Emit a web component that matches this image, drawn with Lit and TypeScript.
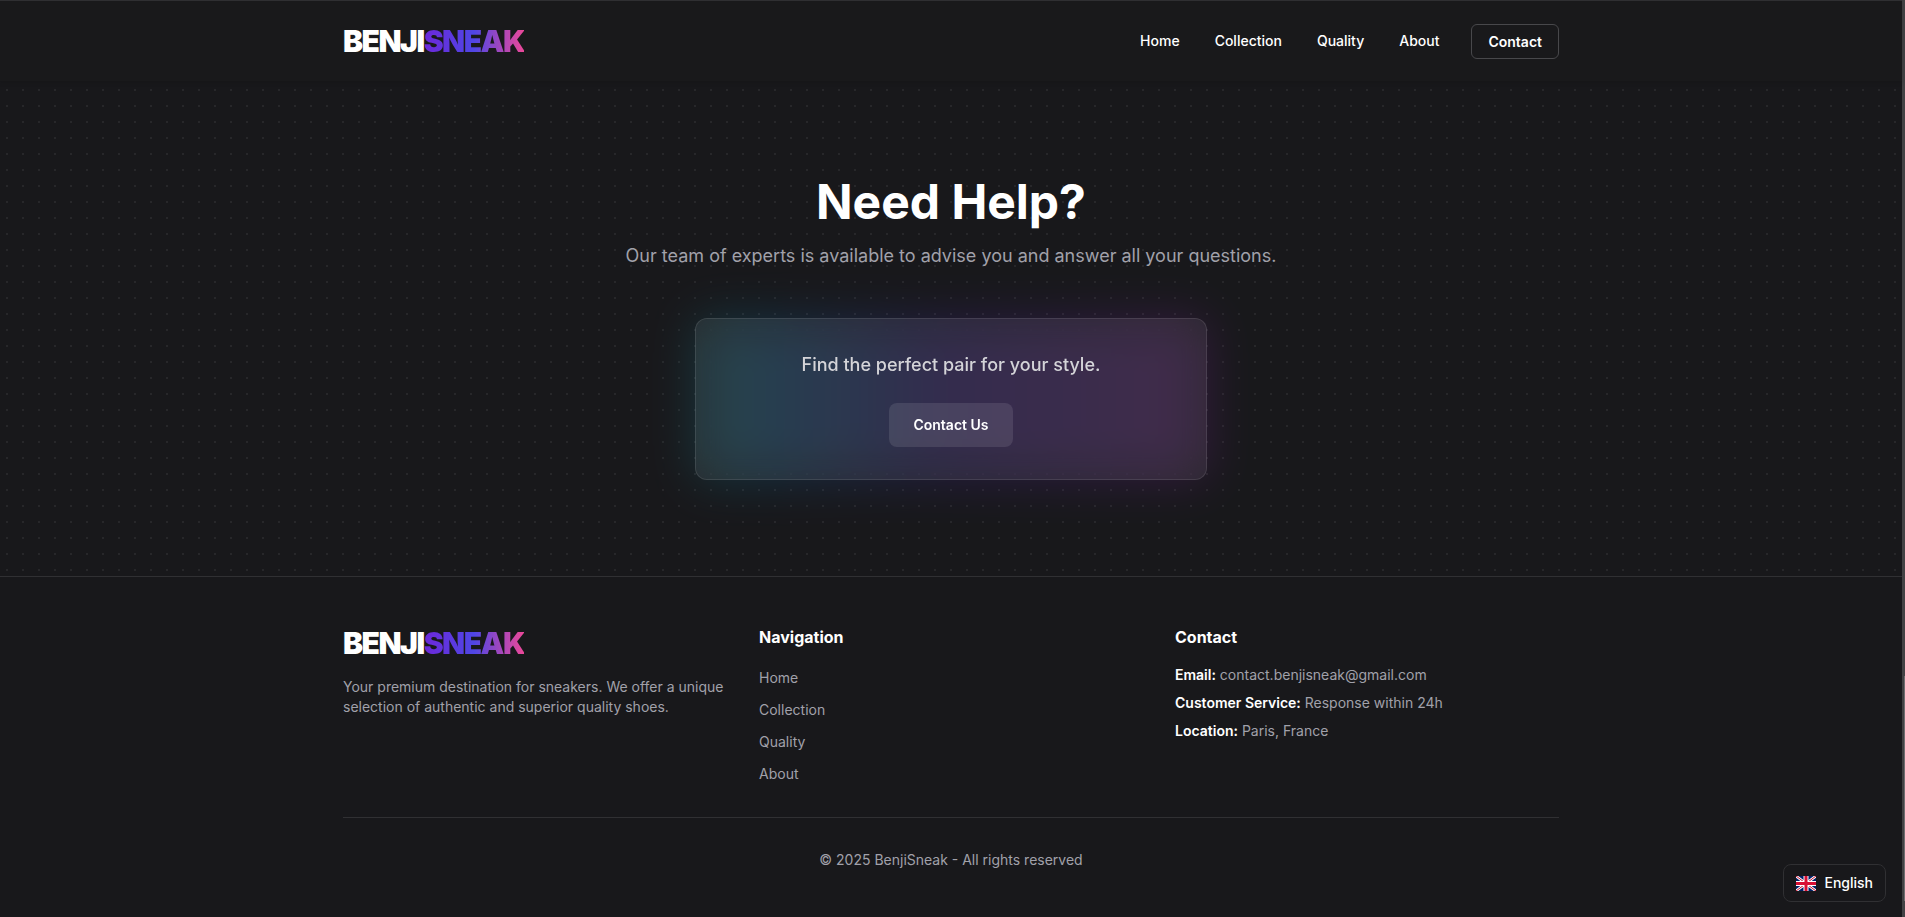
import { LitElement, html, css, svg } from "lit";
import { customElement } from "lit/decorators.js";

const LINKS = ["Home", "Collection", "Quality", "About"];

const DETAILS = [
  { label: "Email:", value: "contact.benjisneak@gmail.com" },
  { label: "Customer Service:", value: "Response within 24h" },
  { label: "Location:", value: "Paris, France" },
];

const flag = svg`
  <clipPath id="frame"><path d="M0 0h60v45H0z" /></clipPath>
  <g clip-path="url(#frame)">
    <path d="M0 0h60v45H0z" fill="#012169" />
    <path d="M0 0l60 45M60 0L0 45" stroke="#fff" stroke-width="8" />
    <path d="M0 0l60 45M60 0L0 45" stroke="#c8102e" stroke-width="3" />
    <path d="M30 0v45M0 22.5h60" stroke="#fff" stroke-width="15" />
    <path d="M30 0v45M0 22.5h60" stroke="#d80f33" stroke-width="9" />
  </g>`;

@customElement("brand-logo")
class BrandLogo extends LitElement {
  static styles = css`
    :host {
      display: block;
    }
    .logo {
      display: inline-block;
      color: #fff;
      font-size: 30px;
      font-weight: 900;
      line-height: 36px;
      letter-spacing: -0.05em;
      text-decoration: none;
    }
    .accent {
      color: transparent;
      background: linear-gradient(90deg, #6d28d9, #4f46e5 50%, #ec4899);
      background-clip: text;
      -webkit-background-clip: text;
    }
  `;

  render() {
    return html`<a class="logo" href="#">BENJI<span class="accent">SNEAK</span></a>`;
  }
}

@customElement("app-root")
class AppRoot extends LitElement {
  static styles = css`
    :host {
      display: flex;
      min-height: 100vh;
      box-sizing: border-box;
      background: #18181b;
      color: #fff;
      font: 14px/20px Inter, "Liberation Sans", sans-serif;
      -webkit-font-smoothing: antialiased;
    }
    *,
    *::before {
      box-sizing: border-box;
    }
    h1,
    h2,
    p,
    ul {
      margin: 0;
      padding: 0;
    }
    ul {
      list-style: none;
    }
    a {
      color: inherit;
      text-decoration: none;
    }
    .page {
      flex: 1;
      min-width: 0;
      display: flex;
      flex-direction: column;
    }
    .scroll {
      flex: none;
      display: flex;
      flex-direction: column;
      align-items: flex-end;
      justify-content: flex-end;
      width: 3px;
      padding-bottom: 16px;
      background: #424244;
    }
    .thumb {
      width: 1px;
      height: 25%;
      background: #6e6e70;
    }
    .wrap {
      max-width: 1280px;
      margin: 0 auto;
      padding: 0 32px;
    }
    .header {
      position: relative;
      background: #19191b;
      border-top: 1px solid #2f2f32;
      box-shadow: 0 1px 5px rgba(0, 0, 0, 0.15);
    }
    .bar {
      display: flex;
      align-items: center;
      justify-content: space-between;
      height: 80px;
    }
    .nav {
      display: flex;
      align-items: center;
      gap: 32px;
      font-weight: 500;
    }
    .links {
      display: flex;
      gap: 35px;
    }
    .outline {
      padding: 7px 16px;
      border: 1px solid #48484b;
      border-radius: 6px;
      font-weight: 600;
      line-height: 19px;
    }
    .help {
      padding: 96px 32px;
      text-align: center;
      background: radial-gradient(circle, #27272a 1px, transparent 1px) -1px 1px / 16px 16px;
    }
    .title {
      font-size: 48px;
      font-weight: 700;
      line-height: 50px;
    }
    .lead {
      margin-top: 14px;
      color: #a1a1aa;
      font-size: 18px;
      line-height: 29px;
    }
    .promo {
      position: relative;
      max-width: 512px;
      margin: 48px auto 0;
    }
    .promo::before {
      content: "";
      position: absolute;
      inset: 0;
      border-radius: 12px;
      background: linear-gradient(90deg, #1cb5c0, #0e94e0 14%, #5b2fd6 50%, #a32bc4);
      filter: blur(24px);
      opacity: 0.2;
    }
    .card {
      position: relative;
      display: flex;
      flex-direction: column;
      align-items: center;
      gap: 24px;
      padding: 32px;
      border: 1px solid rgba(255, 255, 255, 0.1);
      border-radius: 12px;
      background: rgba(255, 255, 255, 0.07);
      backdrop-filter: blur(12px);
    }
    .pitch {
      color: #d4d4d8;
      font-size: 18px;
      font-weight: 500;
      line-height: 28px;
    }
    .cta {
      padding: 12px 24px;
      border: 0;
      border-radius: 8px;
      background: rgba(255, 255, 255, 0.1);
      color: #fff;
      font: inherit;
      font-weight: 600;
      cursor: pointer;
    }
    .footer {
      flex: 1;
      padding: 48px 0 32px;
      border-top: 1px solid #303033;
      color: #a1a1aa;
    }
    .columns {
      display: grid;
      grid-template-columns: repeat(3, 1fr);
      gap: 32px;
      padding-bottom: 24px;
      border-bottom: 1px solid #303033;
    }
    .about {
      margin-top: 16px;
    }
    .heading {
      margin-bottom: 16px;
      color: #fff;
      font-size: 16px;
      font-weight: 700;
      line-height: 24px;
    }
    .site li {
      margin-bottom: 6px;
      line-height: 26px;
    }
    .details li {
      margin-bottom: 8px;
    }
    .details strong {
      color: #fff;
      font-weight: 600;
    }
    .legal {
      margin-top: 32px;
      text-align: center;
    }
    .language {
      position: fixed;
      right: 19px;
      bottom: 15px;
      display: flex;
      align-items: center;
      gap: 8px;
      padding: 8px 12px;
      border: 1px solid #303033;
      border-radius: 8px;
      background: #18181b;
      color: #fff;
      font: inherit;
      font-weight: 500;
      cursor: pointer;
    }
    .flag {
      width: 20px;
      height: 15px;
    }
  `;

  render() {
    return html`
      <div class="page">
        <header class="header">
          <div class="wrap bar">
            <brand-logo></brand-logo>
            <nav class="nav">
              <div class="links">${LINKS.map((name) => html`<a href="#">${name}</a>`)}</div>
              <a class="outline" href="#">Contact</a>
            </nav>
          </div>
        </header>
        <section class="help">
          <h1 class="title">Need Help?</h1>
          <p class="lead">
            Our team of experts is available to advise you and answer all your questions.
          </p>
          <div class="promo">
            <div class="card">
              <p class="pitch">Find the perfect pair for your style.</p>
              <button class="cta">Contact Us</button>
            </div>
          </div>
        </section>
        <footer class="footer">
          <div class="wrap">
            <div class="columns">
              <div>
                <brand-logo></brand-logo>
                <p class="about">
                  Your premium destination for sneakers. We offer a unique selection of authentic
                  and superior quality shoes.
                </p>
              </div>
              <div>
                <h2 class="heading">Navigation</h2>
                <ul class="site">
                  ${LINKS.map((name) => html`<li><a href="#">${name}</a></li>`)}
                </ul>
              </div>
              <div>
                <h2 class="heading">Contact</h2>
                <ul class="details">
                  ${DETAILS.map((d) => html`<li><strong>${d.label}</strong> ${d.value}</li>`)}
                </ul>
              </div>
            </div>
            <p class="legal">© 2025 BenjiSneak - All rights reserved</p>
          </div>
        </footer>
      </div>
      <div class="scroll"><div class="thumb"></div></div>
      <button class="language">
        <svg class="flag" viewBox="0 0 60 45" aria-hidden="true">${flag}</svg>
        English
      </button>
    `;
  }
}
